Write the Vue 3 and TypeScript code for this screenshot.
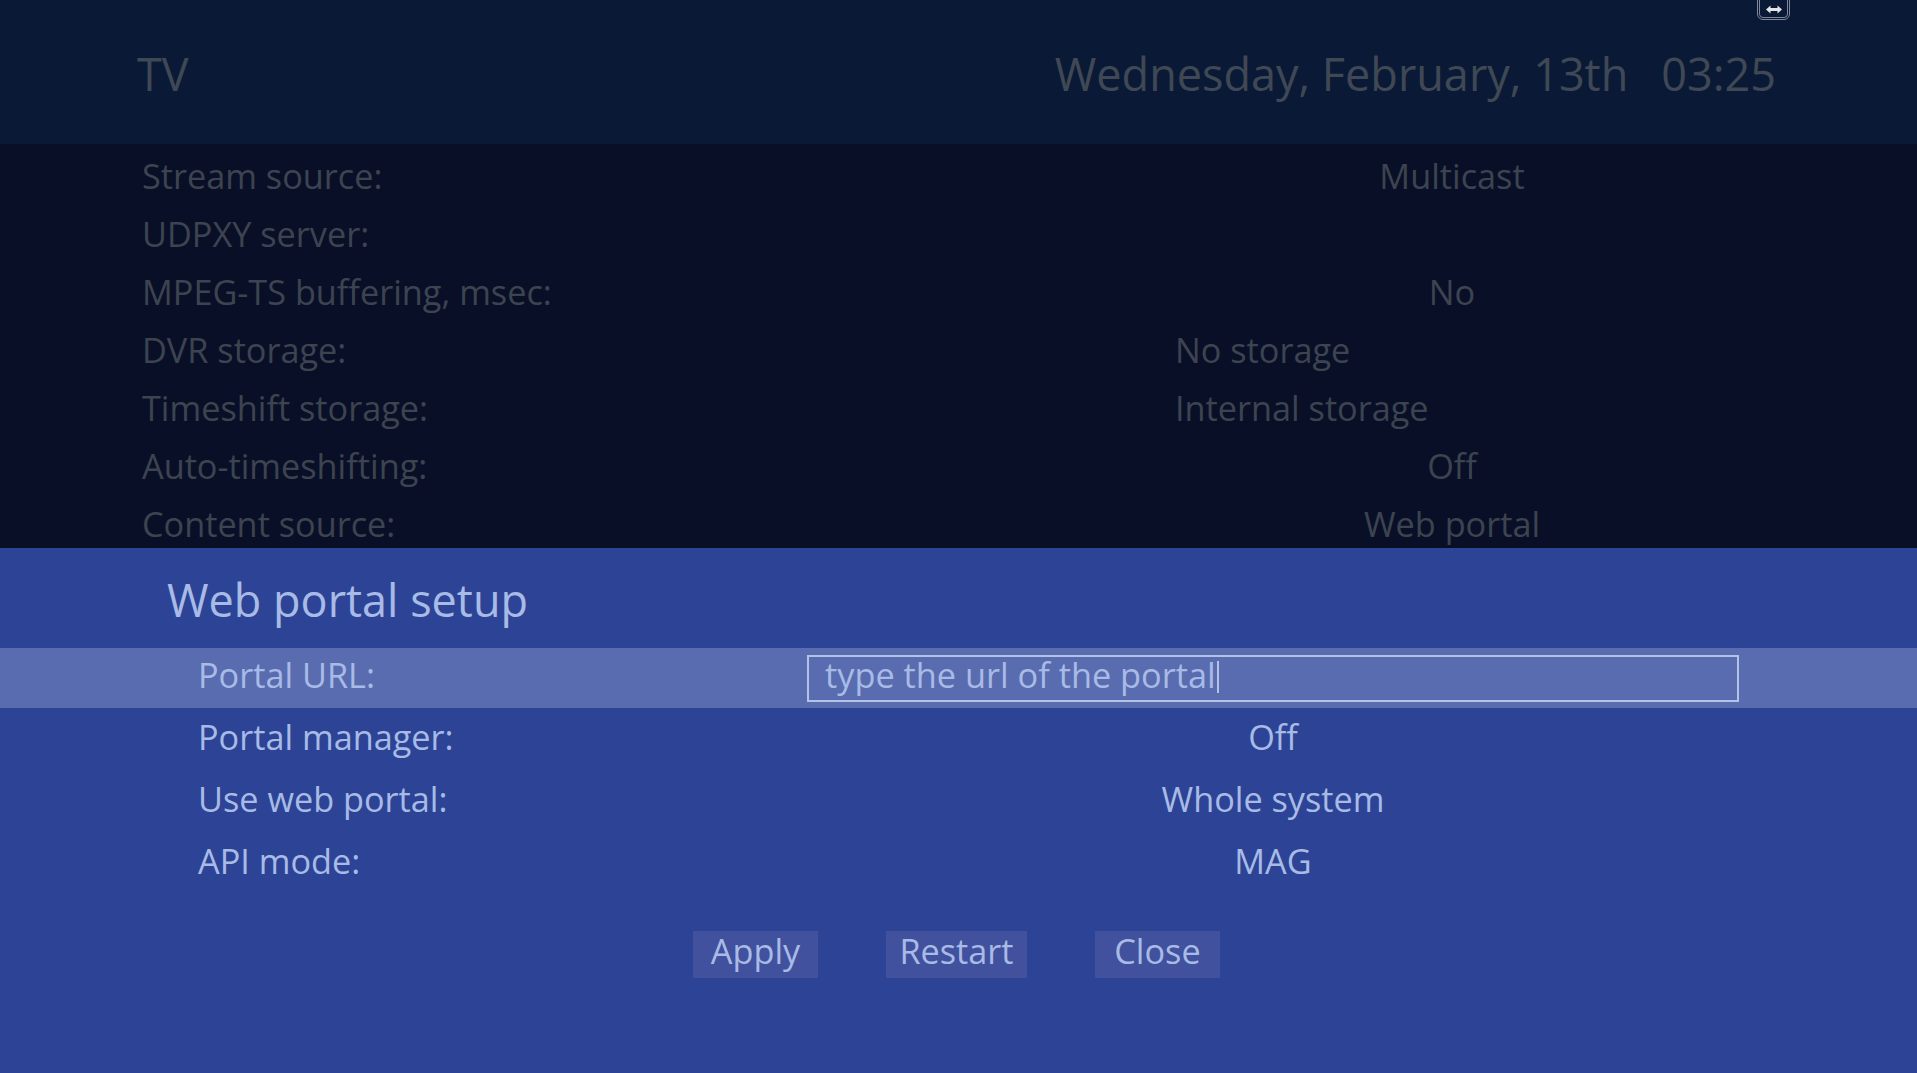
<script setup lang="ts">
interface BgRow { label: string; value: string; left?: boolean }
const bgRows: BgRow[] = [
  { label: 'Stream source:', value: 'Multicast' },
  { label: 'UDPXY server:', value: '' },
  { label: 'MPEG-TS buffering, msec:', value: 'No' },
  { label: 'DVR storage:', value: 'No storage', left: true },
  { label: 'Timeshift storage:', value: 'Internal storage', left: true },
  { label: 'Auto-timeshifting:', value: 'Off' },
  { label: 'Content source:', value: 'Web portal' },
]
const dialogRows = [
  { label: 'Portal manager:', value: 'Off' },
  { label: 'Use web portal:', value: 'Whole system' },
  { label: 'API mode:', value: 'MAG' },
]
const buttons = ['Apply', 'Restart', 'Close']
</script>

<template>
  <div class="screen">
    <header class="top">
      <span class="top-title">TV</span>
      <div class="clock">
        <span>Wednesday, February, 13th</span>
        <span>03:25</span>
      </div>
      <div class="kbd-badge">
        <svg width="16" height="9" viewBox="0 0 16 9"><path d="M0 4.5 4.5 0.5V3H11.5V0.5L16 4.5 11.5 8.500V6H4.500V8.500Z" fill="#e4e4e4" /></svg>
      </div>
    </header>
    <section class="settings">
      <div v-for="r in bgRows" :key="r.label" class="bg-row">
        <span class="bg-label">{{ r.label }}</span>
        <span class="bg-value" :class="{ left: r.left }">{{ r.value }}</span>
      </div>
    </section>
    <section class="dialog">
      <h1 class="dialog-title">Web portal setup</h1>
      <div class="d-row active">
        <span class="d-label">Portal URL:</span>
        <div class="url-box"><span class="url-text">type the url of the portal</span><i class="caret"></i></div>
      </div>
      <div v-for="r in dialogRows" :key="r.label" class="d-row">
        <span class="d-label">{{ r.label }}</span>
        <span class="d-value">{{ r.value }}</span>
      </div>
      <div class="actions">
        <button v-for="b in buttons" :key="b" class="btn" type="button">{{ b }}</button>
      </div>
    </section>
  </div>
</template>

<style>
html, body { margin: 0; background: #2d4496; }
</style>

<style scoped>
.screen {
  width: 1917px;
  height: 1073px;
  display: grid;
  grid-template-rows: 144px 404px 525px;
  overflow: hidden;
  font-family: "Open Sans", sans-serif;
}
.top {
  position: relative;
  background: #0a1a36;
  color: #3f4854;
  display: flex;
  justify-content: space-between;
  align-items: center;
  padding: 4px 141px 0 137px;
  box-sizing: border-box;
  font-size: 45px;
  line-height: 60px;
}
.clock { display: flex; gap: 33px; }
.kbd-badge {
  position: absolute;
  top: -6px;
  left: 1757px;
  width: 33px;
  height: 26px;
  box-sizing: border-box;
  border: 3px double #7f8699;
  border-radius: 6px;
  display: flex;
  align-items: center;
  justify-content: center;
  padding-top: 4px;
}
.settings {
  background: #0a0f28;
  color: #3c4450;
  padding: 3px 0 0 142px;
  overflow: hidden;
  font-size: 34.25px;
}
.bg-row { height: 58px; line-height: 58px; display: flex; }
.bg-label { width: 1033px; flex: none; }
.bg-value { width: 554px; text-align: center; }
.bg-value.left { text-align: left; }
.dialog {
  background: #2d4496;
  color: #a8bbe6;
  font-size: 34.25px;
}
.dialog-title {
  margin: 0;
  height: 100px;
  padding: 2px 0 0 167px;
  font-size: 45px;
  font-weight: 400;
  line-height: 100px;
  box-sizing: border-box;
}
.d-row {
  height: 60px;
  margin-bottom: 2px;
  padding: 0 178px 0 198px;
  display: flex;
  align-items: center;
  line-height: 56px;
}
.d-row.active { background: #5a6cb0; }
.d-label { width: 609px; flex: none; padding-bottom: 6px; }
.d-value { width: 932px; text-align: center; padding-bottom: 6px; }
.url-box {
  width: 932px;
  height: 47px;
  box-sizing: border-box;
  border: 2px solid #b4c2e8;
  padding-left: 16px;
  display: flex;
  align-items: center;
}
.url-text { line-height: 40px; padding-bottom: 6px; font-size: 34.3px; }
.caret { width: 2px; height: 32px; background: #b4c2e8; margin-left: 1px; margin-top: -2px; }
.actions {
  display: flex;
  justify-content: center;
  gap: 68px;
  margin: 37px 4px 0 0;
}
.btn {
  font: inherit;
  color: inherit;
  border: 0;
  background: #41519e;
  height: 47px;
  line-height: 38px;
  padding: 0 0 8px;
  width: 125px;
}
.btn:nth-child(2) { width: 141px; }
</style>
